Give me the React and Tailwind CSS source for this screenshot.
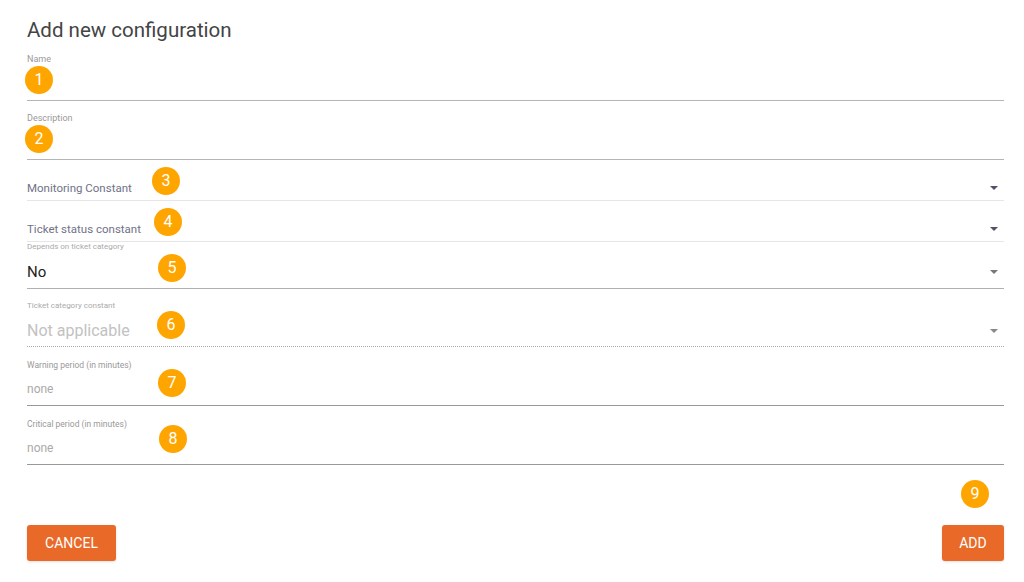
const badges = [
  { n: 1, x: 39, y: 80 },
  { n: 2, x: 39, y: 139 },
  { n: 3, x: 166, y: 181 },
  { n: 4, x: 168, y: 222 },
  { n: 5, x: 172, y: 268 },
  { n: 6, x: 171, y: 325 },
  { n: 7, x: 172, y: 383 },
  { n: 8, x: 173, y: 439 },
  { n: 9, x: 975, y: 494 },
];

function Arrow({ color = "border-t-[#4f5268]" }) {
  return (
    <span
      className={`absolute right-[6px] w-0 h-0 border-l-[4px] border-r-[4px] border-t-[4px] border-l-transparent border-r-transparent ${color}`}
    />
  );
}

function Badge({ n, x, y }) {
  return (
    <div
      className="absolute w-[28px] h-[28px] rounded-full bg-[#ffa500] text-white text-[16px] leading-[28px] text-center"
      style={{ left: x - 14, top: y - 14 }}
    >
      {n}
    </div>
  );
}

export default function App() {
  return (
    <div
      className="relative w-[1024px] h-[582px] bg-white pl-[27px] pr-[20px] pt-[18px]"
      style={{ fontFamily: "Roboto, 'Liberation Sans', Arial, sans-serif" }}
    >
      <h1 className="text-[20.5px] leading-[24px] text-[#444]">Add new configuration</h1>

      <div className="mt-[11px] border-b border-[#b5b5b5]">
        <div className="text-[9px] leading-[12px] text-[#999]">Name</div>
        <div className="h-[35px]" />
      </div>

      <div className="mt-[11px] border-b border-[#b5b5b5]">
        <div className="text-[9px] leading-[12px] text-[#999]">Description</div>
        <div className="h-[35px]" />
      </div>

      <div className="relative flex items-center pt-[20px] pb-[4px] border-b border-[#e6e6e6]">
        <div className="text-[11.5px] leading-[16px] text-[#6f7286]">Monitoring Constant</div>
        <Arrow />
      </div>

      <div className="relative flex items-center pt-[20px] pb-[4px] border-b border-[#e6e6e6]">
        <div className="text-[11.5px] leading-[16px] text-[#6f7286]">Ticket status constant</div>
        <Arrow />
      </div>

      <div className="pb-[6px] border-b border-[#b0b0b0]">
        <div className="text-[8px] leading-[10px] text-[#aaa]">Depends on ticket category</div>
        <div className="relative flex items-center mt-[10px]">
          <div className="text-[15px] leading-[20px] text-[#222]">No</div>
          <Arrow color="border-t-[#777]" />
        </div>
      </div>

      <div className="mt-[12px] pb-[5px] border-b border-dotted border-[#aaa]">
        <div className="text-[8px] leading-[10px] text-[#aaa]">Ticket category constant</div>
        <div className="relative flex items-center mt-[10px]">
          <div className="text-[16px] leading-[20px] text-[#c2c2c2]">Not applicable</div>
          <Arrow color="border-t-[#888]" />
        </div>
      </div>

      <div className="mt-[12px] pb-[8px] border-b border-[#999]">
        <div className="text-[8.5px] leading-[12px] text-[#999]">Warning period (in minutes)</div>
        <div className="mt-[10px] text-[12px] leading-[16px] text-[#aaa]">none</div>
      </div>

      <div className="mt-[12px] pb-[8px] border-b border-[#999]">
        <div className="text-[8.5px] leading-[12px] text-[#999]">Critical period (in minutes)</div>
        <div className="mt-[10px] text-[12px] leading-[16px] text-[#aaa]">none</div>
      </div>

      <div className="mt-[60px] flex justify-between">
        <button className="w-[89px] h-[36px] rounded-[3px] bg-[#e96a28] text-white text-[14px] shadow-sm">
          CANCEL
        </button>
        <button className="w-[62px] h-[36px] rounded-[3px] bg-[#e96a28] text-white text-[14px] shadow-sm">
          ADD
        </button>
      </div>

      {badges.map((b) => (
        <Badge key={b.n} {...b} />
      ))}
    </div>
  );
}
